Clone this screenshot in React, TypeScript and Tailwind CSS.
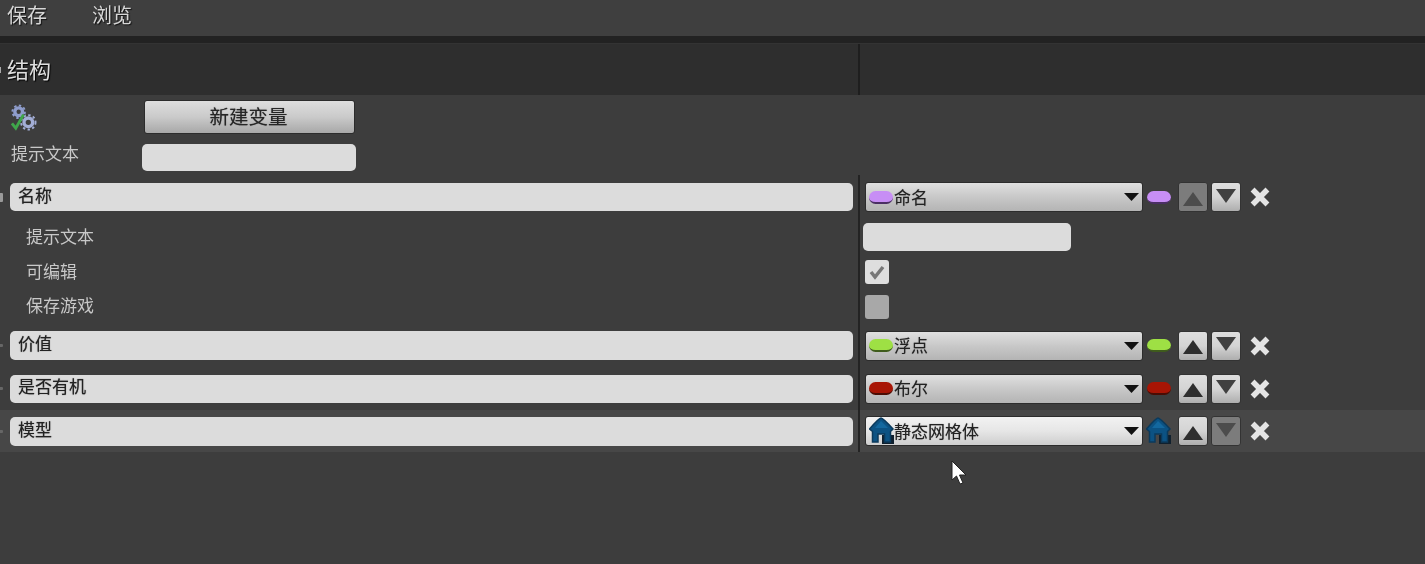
import React from "react";

const FONT = "[font-family:'Noto_Sans_CJK_SC','Noto_Sans',sans-serif]";

const Tri = ({ up, cls }: { up: boolean; cls: string }) => (
  <svg width="20" height="14" viewBox="0 0 20 14" className={cls + (up ? " mt-[3px]" : " -mt-[3px]")}>
    <path d={up ? "M10 0 L20 14 L0 14 Z" : "M0 0 L20 0 L10 14 Z"} fill="currentColor" />
  </svg>
);

const ArrowBtn = ({ up, off }: { up: boolean; off?: boolean }) => (
  <div
    className={
      "w-[30px] h-[30px] rounded-[3px] border border-[#333] flex items-center justify-center " +
      (off
        ? "bg-[#7c7c7c]"
        : "bg-gradient-to-b from-[#dedede] via-[#d4d4d4] to-[#aeaeae]")
    }
  >
    <Tri up={up} cls={off ? "text-[#4c4c4c]" : up ? "text-[#2e2e2e]" : "text-[#404040]"} />
  </div>
);

const Close = () => (
  <svg width="20" height="20" viewBox="0 0 20 20" className="ml-[9px] shrink-0">
    <path d="M4.5 4.5 L15.5 15.5 M15.5 4.5 L4.5 15.5" stroke="#e4e4e4" strokeWidth="5.5" strokeLinecap="square" />
  </svg>
);

const House = () => (
  <svg width="26" height="28" viewBox="0 0 26 28" className="shrink-0">
    <rect x="13" y="18" width="12" height="9" fill="#10202e" />
    <path d="M12 1 Q14 1 24 12 L21.5 14.5 L21.5 25 L15.5 25 L15.5 17 L9 17 L9 25 L3.5 25 L3.5 14.5 L0.5 12 Q10 1 12 1 Z" fill="#0c5283" stroke="#0b3a5c" strokeWidth="1.5" />
    <path d="M12 4 L19 11 L6 11 Z" fill="#13689f" />
  </svg>
);

const Pill = ({ color, edge }: { color: string; edge: string }) => (
  <div
    className="w-[24px] h-[13px] rounded-full shrink-0 border-b-2"
    style={{ backgroundColor: color, borderColor: edge }}
  />
);

type T = { name: string; color?: string; edge?: string; house?: boolean; bright?: boolean };

const Dropdown = ({ name, color, edge, house, bright }: T) => (
  <div
    className={
      "w-[278px] h-[30px] rounded-[3px] border border-[#2c2c2c] flex items-center pr-[3px] text-[#222] text-[17px] [text-shadow:0_0_1px_#777] shrink-0 bg-gradient-to-b " +
      (bright
        ? "from-[#f2f2f2] via-[#e6e6e6] to-[#cecece] pl-[3px]"
        : "from-[#e0e0e0] via-[#c8c8c8] to-[#b4b4b4] pl-[3px]")
    }
  >
    {house ? (
      <div className="w-[25px] flex items-center"><House /></div>
    ) : (
      <div className="w-[25px]"><Pill color={color!} edge={edge!} /></div>
    )}
    <span className="flex-1 leading-none -mt-[2px]">{name}</span>
    <svg width="15" height="8" viewBox="0 0 15 8"><path d="M0 0 H15 L7.5 8 Z" fill="#111" /></svg>
  </div>
);

const Row = ({
  h,
  left,
  right,
  bg,
  mark,
}: {
  h: string;
  left: React.ReactNode;
  right: React.ReactNode;
  bg?: string;
  mark?: string;
}) => (
  <div className={"flex " + h + " " + (bg ?? "")}>
    <div className="w-[858px] shrink-0 flex items-center">
      <div className={"w-[3px] shrink-0 rounded-r-[1px] " + (mark ?? "")} />
      <div className="flex-1 min-w-0 pl-[7px] pr-[5px]">{left}</div>
    </div>
    <div className="w-[2px] bg-[#232323] shrink-0" />
    <div className="flex-1 flex items-center pl-[5px]">{right}</div>
  </div>
);

const Field = ({ label, tall }: { label: string; tall?: boolean }) => (
  <div
    className={
      "rounded-[5px] bg-[#dcdcdc] flex items-center pl-[8px] text-[17px] text-[#222] [text-shadow:0_0_1px_#555] leading-none " +
      (tall ? "h-[29px]" : "h-[28px]")
    }
  >
    <span className="-mt-[6px]">{label}</span>
  </div>
);

const Sub = ({ label, lift }: { label: string; lift?: boolean }) => (
  <div className={"pl-[16px] text-[17px] leading-none text-[#c8c8c8] " + (lift ? "-mt-[5px]" : "-mt-[3px]")}>{label}</div>
);

const Var = ({ t, upOff, downOff }: { t: T; upOff?: boolean; downOff?: boolean }) => (
  <>
    <Dropdown {...t} />
    <div className="w-[30px] flex justify-center shrink-0 ml-[1px] -mr-[1px]">
      {t.house ? <House /> : <Pill color={t.color!} edge={t.edge!} />}
    </div>
    <div className="flex gap-[3px] ml-[5px]">
      <ArrowBtn up off={upOff} />
      <ArrowBtn up={false} off={downOff} />
    </div>
    <Close />
  </>
);

export default function App() {
  return (
    <div className={"w-[1425px] h-[564px] bg-[#3d3d3d] overflow-hidden relative flex flex-col blur-[0.5px] " + FONT}>
      <div className="h-[36px] bg-[#3f3f3f] flex items-center pl-[7px] gap-[45px] text-[20px] text-[#d6d6d6] [text-shadow:1px_1px_1px_#111] leading-none shrink-0">
        <span className="-mt-[6px]">保存</span>
        <span className="-mt-[6px]">浏览</span>
      </div>
      <div className="h-[8px] bg-[#222] border-b border-[#333] shrink-0" />
      <div className="h-[51px] bg-[#2e2e2e] flex shrink-0">
        <div className="w-[858px] flex items-center">
          <div className="w-[1px] h-[6px] bg-[#aaa]" />
          <span className="ml-[6px] text-[22px] leading-none text-[#dedede] [text-shadow:1px_1px_1px_#000] -mt-[3px]">结构</span>
        </div>
        <div className="w-[2px] bg-[#1e1e1e]" />
      </div>

      <div className="h-[80px] shrink-0 flex flex-col pt-[5px] gap-[10px]">
        <div className="flex items-center h-[34px]">
          <div className="w-[144px] pl-[10px]">
            <svg width="27" height="27" viewBox="0 0 28 28">
              <circle cx="9" cy="8" r="4" fill="none" stroke="#8f9dcc" strokeWidth="3.5" />
              <circle cx="9" cy="8" r="6.5" fill="none" stroke="#8f9dcc" strokeWidth="2" strokeDasharray="2.5 2.5" />
              <circle cx="19" cy="19" r="4.5" fill="none" stroke="#a3aed6" strokeWidth="3.5" />
              <circle cx="19" cy="19" r="7.5" fill="none" stroke="#a3aed6" strokeWidth="2" strokeDasharray="2.5 2.5" />
              <path d="M2 20 L6 25 L14 11" fill="none" stroke="#3fa64a" strokeWidth="3" />
            </svg>
          </div>
          <div className="w-[211px] h-[34px] rounded-[3px] border border-[#2c2c2c] bg-gradient-to-b from-[#dedede] via-[#cacaca] to-[#a8a8a8] flex items-center justify-center text-[19.5px] text-[#262626] [text-shadow:0_0_1px_#666] leading-none">
            <span className="-mt-[3px] -ml-[2px]">新建变量</span>
          </div>
        </div>
        <div className="flex items-center h-[27px]">
          <div className="w-[142px] pl-[11px] text-[17px] text-[#c8c8c8] leading-none -mt-[11px]">提示文本</div>
          <div className="w-[214px] h-[27px] rounded-[5px] bg-[#dcdcdc]" />
        </div>
      </div>

      <Row
        h="h-[44px]"
        mark="h-[9px] bg-[#999]"
        left={<Field label="名称" />}
        right={<Var t={{ name: "命名", color: "#c78ef5", edge: "#4a2f63" }} upOff />}
      />
      <Row
        h="h-[35px]"
        left={<Sub label="提示文本" />}
        right={<div className="w-[208px] h-[28px] rounded-[5px] bg-[#dcdcdc] -ml-[2px]" />}
      />
      <Row
        h="h-[36px]"
        left={<Sub label="可编辑" />}
        right={
          <div className="w-[24px] h-[24px] rounded-[3px] bg-[#dedede] flex items-center justify-center">
            <svg width="16" height="16" viewBox="0 0 16 16">
              <path d="M2 8 L6 13 L14 3" fill="none" stroke="#777" strokeWidth="3.5" />
            </svg>
          </div>
        }
      />
      <Row
        h="h-[34px]"
        left={<Sub label="保存游戏" lift />}
        right={<div className="w-[24px] h-[24px] rounded-[3px] bg-[#a8a8a8]" />}
      />
      <Row
        h="h-[43px]"
        mark="h-[3px] bg-[#666]"
        left={<Field label="价值" tall />}
        right={<Var t={{ name: "浮点", color: "#9ee044", edge: "#3f5c1c" }} />}
      />
      <Row
        h="h-[43px]"
        mark="h-[3px] bg-[#666]"
        left={<Field label="是否有机" />}
        right={<Var t={{ name: "布尔", color: "#a81505", edge: "#4a0c04" }} />}
      />
      <Row
        h="h-[42px]"
        bg="bg-[#474747]"
        mark="h-[3px] bg-[#666]"
        left={<Field label="模型" tall />}
        right={<Var t={{ name: "静态网格体", house: true, bright: true }} downOff />}
      />

      <svg width="18" height="26" viewBox="0 0 18 26" className="absolute left-[950px] top-[460px]">
        <path d="M2 1 L2 20 L6.5 16 L10 24 L13 23 L9.5 15 L16 15 Z" fill="#fff" stroke="#222" strokeWidth="1" />
      </svg>
    </div>
  );
}
